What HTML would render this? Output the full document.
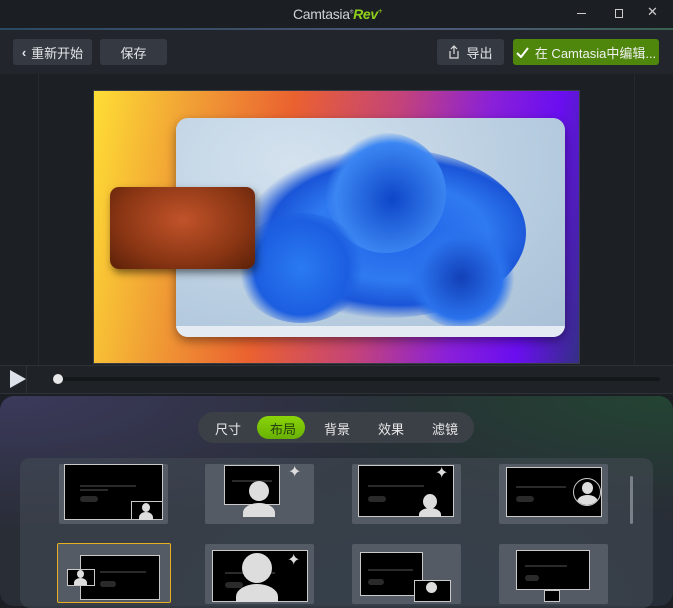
<!DOCTYPE html>
<html><head><meta charset="utf-8"><style>
*{margin:0;padding:0;box-sizing:border-box}
body{width:673px;height:600px;overflow:hidden;background:#1c1f24;font-family:"Liberation Sans","Noto Sans CJK SC",sans-serif;color:#e6e8ea;position:relative}
.abs{position:absolute}
.btn{position:absolute;top:39px;height:26px;background:#353a42;border-radius:3px;font-size:13px;color:#e4e6e8;display:flex;align-items:center;justify-content:center}
.th{position:absolute;background:#545b64;border-radius:2px}
.scr{position:absolute;background:#000;border:1px solid #c9c9c9}
.ln{position:absolute;height:2px;background:#2a2a2a}
.pill{position:absolute;height:6px;background:#2a2a2a;border-radius:3px}
.head{position:absolute;background:#ddd;border-radius:50%}
.body{position:absolute;background:#ddd;border-radius:50% 50% 0 0/70% 70% 0 0}
</style></head><body>
<div class="abs" style="left:0;top:0;width:673px;height:29px;background:#1b1e23"></div>
<div class="abs" style="left:293px;top:6px;font-size:14px;color:#cfd2d5;letter-spacing:-0.3px">Camtasia<sup style="font-size:5px">®</sup><b style="color:#8fd11a;font-style:italic;font-size:14px">Rev</b><sup style="color:#8fd11a;font-size:8px">+</sup></div>
<div class="abs" style="left:577px;top:13px;width:9px;height:1px;background:#ccc"></div>
<div class="abs" style="left:615px;top:9px;width:8px;height:9px;border:1px solid #ccc"></div>
<div class="abs" style="left:647px;top:4px;font-size:13px;color:#ccc">✕</div>
<div class="abs" style="left:0;top:28px;width:673px;height:2px;background:linear-gradient(90deg,#2b4a63,#3c4d66,#4d5a7a,#3a6050)"></div>
<div class="abs" style="left:0;top:30px;width:673px;height:44px;background:#22262c"></div>
<div class="btn" style="left:13px;width:79px"><span style="font-weight:bold;margin-right:5px">‹</span>重新开始</div>
<div class="btn" style="left:100px;width:67px">保存</div>
<div class="btn" style="left:437px;width:67px"><svg width="12" height="14" viewBox="0 0 12 14" style="margin-right:6px"><path d="M6 1v8M3 4l3-3 3 3M2 6v7h8V6" fill="none" stroke="#ddd" stroke-width="1.2"/></svg>导出</div>
<div class="btn" style="left:513px;width:146px;background:#4f870c;color:#f0f0f0"><svg width="13" height="11" viewBox="0 0 13 11" style="margin-right:6px"><path d="M1 6l4 4 7-9" fill="none" stroke="#fff" stroke-width="2"/></svg>在 Camtasia中编辑...</div>
<div class="abs" style="left:38px;top:74px;width:1px;height:292px;background:#262a30"></div>
<div class="abs" style="left:634px;top:74px;width:1px;height:292px;background:#262a30"></div>
<div class="abs" style="left:93px;top:90px;width:487px;height:274px;border:1px solid #3a3d44;background:linear-gradient(100deg,#fede35 0%,#f1a135 18%,#ea6130 38%,#c3437a 58%,#8a20d8 75%,#6a0ef0 88%,#342f86 100%);overflow:hidden">
 <div class="abs" style="left:82px;top:27px;width:389px;height:219px;border-radius:12px;background:radial-gradient(ellipse at 30% 20%,#d4e2ee,#b8cde0 60%,#a8bfd6);box-shadow:0 4px 10px rgba(0,0,0,.4);overflow:hidden">
  <div class="abs" style="left:70px;top:30px;width:280px;height:170px;border-radius:50%;background:radial-gradient(ellipse at 55% 50%,#1f62e8 0%,#2f7af0 40%,#1a55d8 60%,rgba(40,110,230,0) 72%)"></div>
  <div class="abs" style="left:150px;top:15px;width:120px;height:120px;border-radius:50%;background:radial-gradient(circle at 55% 55%,#0e46c8,#3b86f2 60%,rgba(60,130,240,0) 72%)"></div>
  <div class="abs" style="left:60px;top:95px;width:130px;height:110px;border-radius:50%;background:radial-gradient(circle,#2a7af2,#1c5ee0 55%,rgba(40,110,230,0) 72%)"></div>
  <div class="abs" style="left:230px;top:110px;width:110px;height:100px;border-radius:50%;background:radial-gradient(circle,#1240b8,#2a72ec 55%,rgba(40,110,230,0) 72%)"></div>
  <div class="abs" style="left:0;top:208px;width:389px;height:11px;background:#e4ebf3"></div>
 </div>
 <div class="abs" style="left:16px;top:96px;width:145px;height:82px;border-radius:9px;background:radial-gradient(ellipse at 50% 40%,#c1532a,#8b3614 60%,#5a2008);box-shadow:2px 4px 8px rgba(0,0,0,.5)"></div>
</div>
<div class="abs" style="left:0;top:365px;width:673px;height:29px;background:#1f2328;border-top:1px solid #2d3138;border-bottom:1px solid #2d3138"></div>
<div class="abs" style="left:26px;top:366px;width:1px;height:28px;background:#2d3138"></div>
<svg class="abs" style="left:9px;top:369px" width="18" height="20"><path d="M1 1l16 9-16 9z" fill="#dde2ea"/></svg>
<div class="abs" style="left:52px;top:377px;width:608px;height:4px;background:#15181b;border-radius:2px"></div>
<div class="abs" style="left:53px;top:374px;width:10px;height:10px;border-radius:50%;background:#e8e8e8"></div>
<div class="abs" style="left:0;top:396px;width:673px;height:210px;border-radius:14px;background:radial-gradient(ellipse at 0% 0%,#3b3a5c,rgba(40,44,56,0) 45%),radial-gradient(ellipse at 100% 0%,#234433,rgba(40,44,56,0) 40%),radial-gradient(ellipse at 60% 100%,#24323f,#292d36 60%)"></div>
<div class="abs" style="left:198px;top:412px;width:276px;height:31px;border-radius:16px;background:#3b4047"></div>
<div class="abs" style="left:257px;top:416px;width:48px;height:23px;border-radius:12px;background:linear-gradient(180deg,#8bd40a,#68b104)"></div>
<div class="abs" style="left:198px;top:419px;width:276px;font-size:13px;color:#e8e8e8">
<span class="abs" style="left:17px">尺寸</span><span class="abs" style="left:72px;color:#24400a">布局</span><span class="abs" style="left:126px">背景</span><span class="abs" style="left:180px">效果</span><span class="abs" style="left:234px">滤镜</span></div>
<div class="abs" style="left:20px;top:458px;width:633px;height:150px;border-radius:10px;background:rgba(70,76,86,.55)"></div>
<div class="abs" style="left:630px;top:476px;width:3px;height:48px;background:#7a8088;border-radius:2px"></div>
<div class="th" style="left:59px;top:464px;width:109px;height:60px"></div>
<div class="scr" style="left:64px;top:464px;width:99px;height:56px"></div>
<div class="ln" style="left:80px;top:485px;width:56px"></div><div class="ln" style="left:80px;top:489px;width:28px"></div><div class="pill" style="left:80px;top:496px;width:18px"></div>
<div class="scr" style="left:131px;top:501px;width:32px;height:19px;background:#000"></div>
<div class="head" style="left:142px;top:503px;width:8px;height:9px"></div><div class="body" style="left:139px;top:512px;width:14px;height:8px"></div>
<div class="th" style="left:205px;top:464px;width:109px;height:60px"></div>
<div class="scr" style="left:224px;top:465px;width:56px;height:40px"></div>
<div class="ln" style="left:232px;top:480px;width:40px"></div>
<div class="head" style="left:249px;top:481px;width:20px;height:20px"></div><div class="body" style="left:243px;top:503px;width:32px;height:14px"></div>
<div class="abs" style="left:288px;top:462px;color:#ddd;font-size:16px">✦</div>
<div class="th" style="left:352px;top:464px;width:109px;height:60px"></div>
<div class="scr" style="left:358px;top:465px;width:96px;height:52px"></div>
<div class="ln" style="left:368px;top:485px;width:56px"></div><div class="pill" style="left:368px;top:496px;width:18px"></div>
<div class="head" style="left:423px;top:494px;width:14px;height:15px"></div><div class="body" style="left:419px;top:508px;width:22px;height:9px"></div>
<div class="abs" style="left:435px;top:463px;color:#ddd;font-size:16px">✦</div>
<div class="th" style="left:499px;top:464px;width:109px;height:60px"></div>
<div class="scr" style="left:506px;top:467px;width:96px;height:50px"></div>
<div class="ln" style="left:516px;top:486px;width:50px"></div><div class="pill" style="left:516px;top:496px;width:18px"></div>
<div class="abs" style="left:573px;top:478px;width:28px;height:28px;border-radius:50%;background:#000;border:1px solid #ccc;overflow:hidden"><div class="head" style="left:8px;top:3px;width:11px;height:12px"></div><div class="body" style="left:3px;top:16px;width:21px;height:10px"></div></div>
<div class="th" style="left:57px;top:543px;width:114px;height:60px;border:1px solid #e8b020"></div>
<div class="scr" style="left:80px;top:555px;width:80px;height:45px"></div>
<div class="ln" style="left:100px;top:571px;width:46px"></div><div class="pill" style="left:100px;top:581px;width:16px"></div>
<div class="scr" style="left:67px;top:569px;width:28px;height:17px"></div>
<div class="head" style="left:77px;top:570px;width:7px;height:8px"></div><div class="body" style="left:74px;top:578px;width:13px;height:7px"></div>
<div class="th" style="left:205px;top:544px;width:109px;height:60px"></div>
<div class="scr" style="left:212px;top:550px;width:96px;height:52px"></div>
<div class="ln" style="left:225px;top:572px;width:50px"></div><div class="pill" style="left:225px;top:582px;width:18px"></div>
<div class="head" style="left:242px;top:553px;width:30px;height:30px"></div><div class="body" style="left:236px;top:584px;width:42px;height:18px"></div>
<div class="abs" style="left:287px;top:550px;color:#ddd;font-size:16px">✦</div>
<div class="th" style="left:352px;top:544px;width:109px;height:60px"></div>
<div class="scr" style="left:360px;top:552px;width:63px;height:44px"></div>
<div class="ln" style="left:368px;top:569px;width:45px"></div><div class="pill" style="left:368px;top:579px;width:16px"></div>
<div class="scr" style="left:414px;top:580px;width:37px;height:22px"></div>
<div class="head" style="left:426px;top:582px;width:11px;height:11px"></div>
<div class="th" style="left:499px;top:544px;width:109px;height:60px"></div>
<div class="scr" style="left:516px;top:550px;width:74px;height:40px"></div>
<div class="ln" style="left:525px;top:565px;width:42px"></div><div class="pill" style="left:525px;top:575px;width:14px"></div>
<div class="scr" style="left:544px;top:590px;width:16px;height:12px"></div>
</body></html>
